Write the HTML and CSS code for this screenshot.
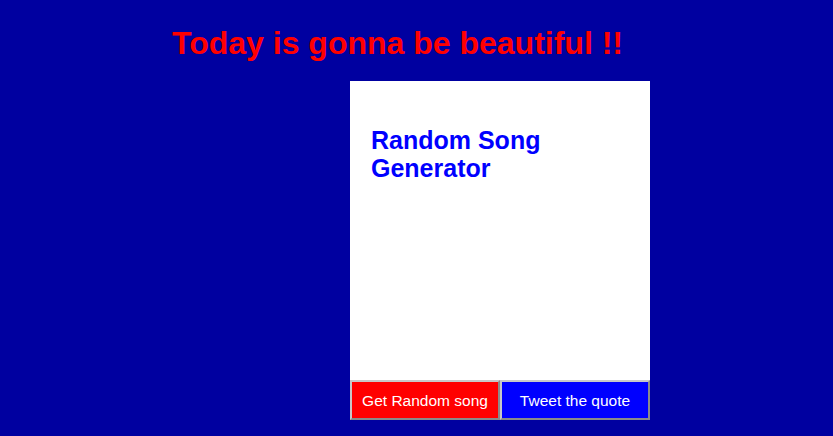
FILE: index.html
```html
<!DOCTYPE html>
<html>
<head>
<meta charset="utf-8">
<link rel="stylesheet" href="styles.css">
</head>
<body>
<h1 class="headline">Today is gonna be beautiful !!</h1>
<div class="stage">
  <div class="card">
    <div class="card-body">
      <h2 class="card-title">Random Song Generator</h2>
    </div>
    <div class="actions">
      <button class="btn btn-red">Get Random song</button>
      <button class="btn btn-blue">Tweet the quote</button>
    </div>
  </div>
</div>
</body>
</html>
```
FILE: styles.css
```css
html, body {
  margin: 0;
  padding: 0;
  background: #0000a0;
  font-family: "Liberation Sans", Arial, sans-serif;
}
body {
  height: 436px;
  overflow: hidden;
}
.headline {
  margin: 0;
  padding: 23px 38px 0 0;
  height: 81px;
  box-sizing: border-box;
  text-align: center;
  color: #ff0000;
  font-size: 32px;
  font-weight: bold;
  line-height: 40px;
}
.stage {
  padding-left: 350px;
}
.card {
  width: 300px;
  display: flex;
  flex-direction: column;
}
.card-body {
  background: #ffffff;
  height: 299px;
  box-sizing: border-box;
  padding: 45px 20px 0 21px;
}
.card-title {
  margin: 0;
  color: #0000ff;
  font-size: 25px;
  font-weight: bold;
  line-height: 28px;
}
.actions {
  display: flex;
}
.btn {
  width: 150px;
  height: 40px;
  box-sizing: border-box;
  border: 2px solid;
  border-color: #c8c8c8 #8a8a8a #8a8a8a #c8c8c8;
  color: #ffffff;
  font-family: "Liberation Sans", Arial, sans-serif;
  font-size: 15.5px;
  padding: 2px 0 0;
}
.btn-red { background: #ff0000; }
.btn-blue { background: #0000ff; }
```
